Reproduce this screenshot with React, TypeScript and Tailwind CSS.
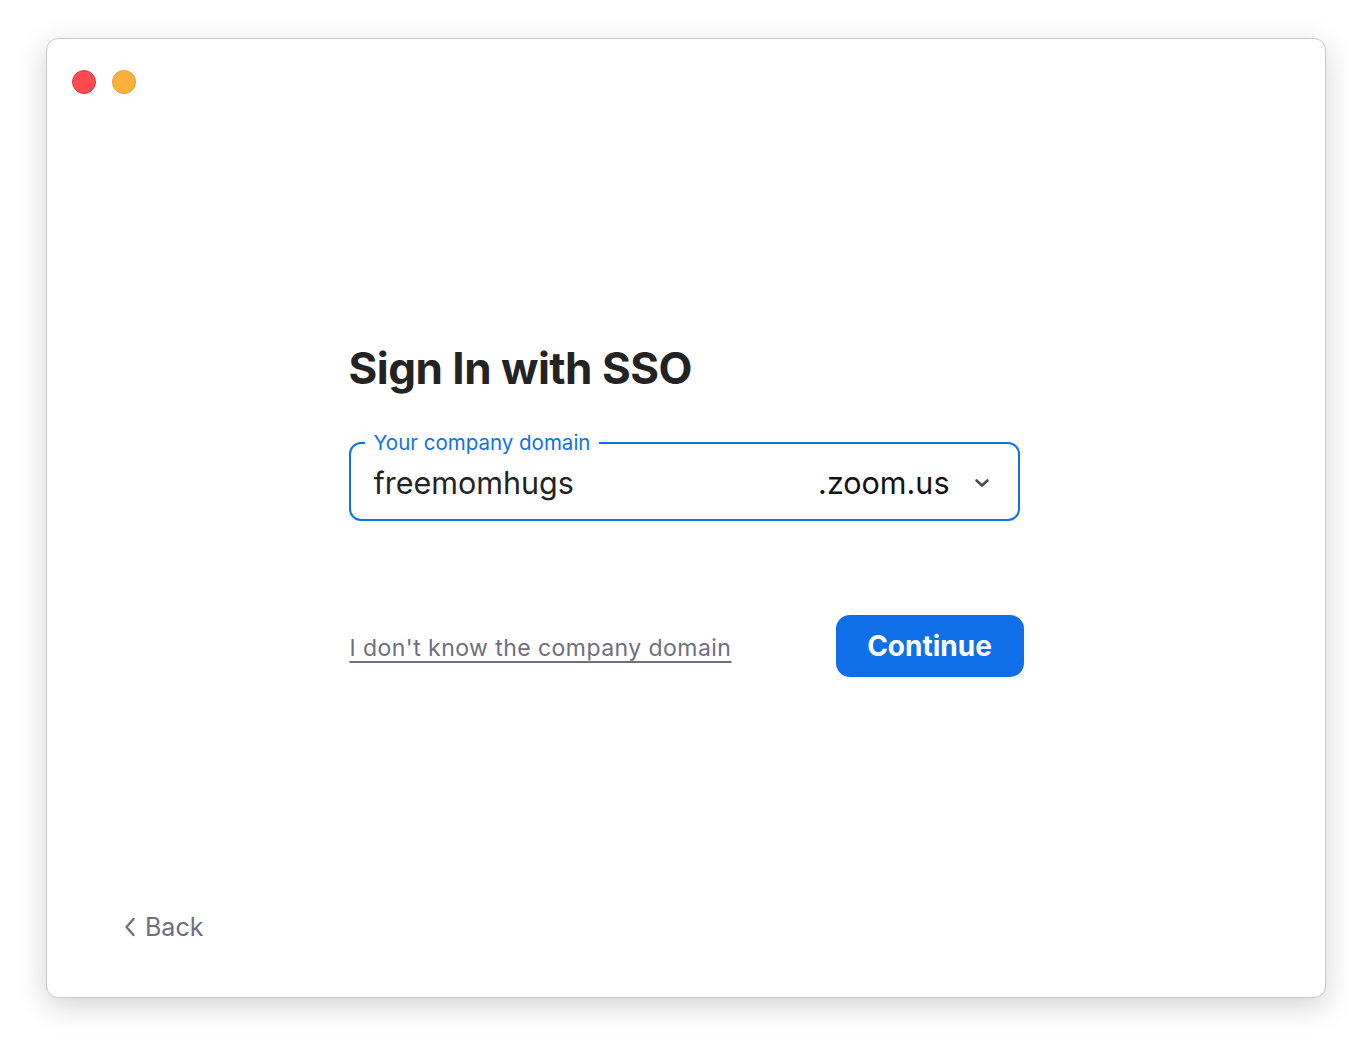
import React, { useState } from 'react';

const App: React.FC = () => {
  const [domain, setDomain] = useState('freemomhugs');

  return (
    <div className="min-h-[1052px] w-full bg-white pt-[38px] pl-[46px]" style={{ fontFamily: 'Inter, "Noto Sans", sans-serif' }}>
      <div className="flex h-[960px] w-[1280px] flex-col rounded-[12px] border border-[#c9c9c9] bg-white shadow-[0_8px_30px_rgba(0,0,0,0.18)]">
        {/* window controls */}
        <div className="flex gap-4 pl-[25px] pt-[31px]">
          <div className="h-6 w-6 rounded-full border border-[#e5393f] bg-[#fe4a50]"></div>
          <div className="h-6 w-6 rounded-full border border-[#e79d28] bg-[#feb03a]"></div>
        </div>

        <div className="flex flex-1 justify-center pt-[244px]">
          <div className="flex w-[675px] flex-col">
            <h1 className="text-[44px] font-bold leading-[60px] tracking-[-0.5px] text-[#232323]">Sign In with SSO</h1>

            <div className="relative mt-[44px] mr-[4px] flex h-[79px] items-center rounded-[12px] border-2 border-[#0e72ed] pl-[23px] pr-[28px]">
              <span className="absolute -top-[13px] left-[14px] bg-white px-[9px] text-[20.5px] leading-[24px] text-[#0e72ed]">Your company domain</span>
              <input
                value={domain}
                onChange={e => setDomain(e.target.value)}
                className="mt-[2px] min-w-0 flex-1 bg-transparent text-[30.5px] text-[#232323] outline-none"
              />
              <span className="mt-[2px] text-[30.5px] text-[#131313]">.zoom.us</span>
              <svg className="ml-[24px] mt-[2px] shrink-0" width="16" height="10" viewBox="0 0 16 10" fill="none">
                <path d="M2.5 2.5 L8 7.5 L13.5 2.5" stroke="#4a4a55" strokeWidth="2.6" strokeLinecap="round" strokeLinejoin="round" />
              </svg>
            </div>

            <div className="mt-[94px] flex items-center justify-between">
              <a href="#" className="mt-[5px] pl-[1px] text-[23px] tracking-[0.45px] text-[#6e6e7e] underline decoration-[1.5px] underline-offset-[5px]">I don't know the company domain</a>
              <button className="h-[62px] w-[188px] rounded-[14px] bg-[#0e6fe8] text-[28px] font-bold text-white">Continue</button>
            </div>
          </div>
        </div>

        <div className="flex items-center gap-[9px] pb-[51px] pl-[77px] text-[25px] text-[#6e6e7e]">
          <svg width="12" height="20" viewBox="0 0 12 20" fill="none">
            <path d="M9.5 2 L2.5 10 L9.5 18" stroke="#6e6e7e" strokeWidth="2.4" strokeLinecap="round" strokeLinejoin="round" />
          </svg>
          <span>Back</span>
        </div>
      </div>
    </div>
  );
};

export default App;
